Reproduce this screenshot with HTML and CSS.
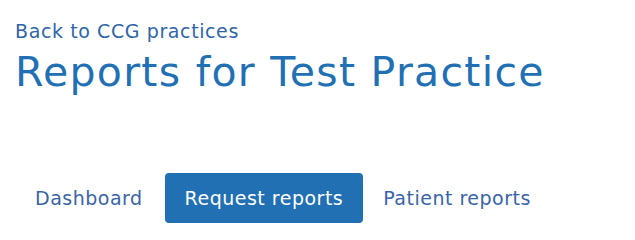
FILE: index.html
```html
<!DOCTYPE html>
<html lang="en">
<head>
<meta charset="utf-8">
<title>Reports for Test Practice</title>
<link rel="stylesheet" href="styles.css">
</head>
<body>
<main class="page">
  <a class="back-link" href="#">Back to CCG practices</a>
  <h1 class="title">Reports for Test Practice</h1>
  <nav class="tabs">
    <a class="tab" href="#">Dashboard</a>
    <a class="tab tab-active" href="#">Request reports</a>
    <a class="tab" href="#">Patient reports</a>
  </nav>
</main>
</body>
</html>
```
FILE: styles.css
```css
html, body {
  margin: 0;
  padding: 0;
  background: #ffffff;
}
body {
  font-family: "DejaVu Sans", "Open Sans", sans-serif;
  color: #2270b4;
}
.page {
  padding: 16px 15px 0 15px;
  display: flex;
  flex-direction: column;
  align-items: flex-start;
}
.back-link {
  color: #2f65a8;
  text-decoration: none;
  font-size: 19px;
  line-height: 30px;
  letter-spacing: 0.6px;
}
.title {
  margin: 0;
  font-weight: 400;
  font-size: 41px;
  line-height: 52px;
  color: #2270b4;
  letter-spacing: 1.3px;
}
.tabs {
  display: flex;
  margin-top: 75px;
}
.tab {
  display: flex;
  align-items: center;
  height: 50px;
  padding: 0 20px;
  font-size: 19px;
  color: #3a64a6;
  text-decoration: none;
  border-radius: 4px;
  letter-spacing: 0.5px;
}
.tab:first-child {
  padding-right: 22px;
}
.tab-active {
  background: #2270b4;
  color: #ffffff;
  padding: 0 20px;
}
```
